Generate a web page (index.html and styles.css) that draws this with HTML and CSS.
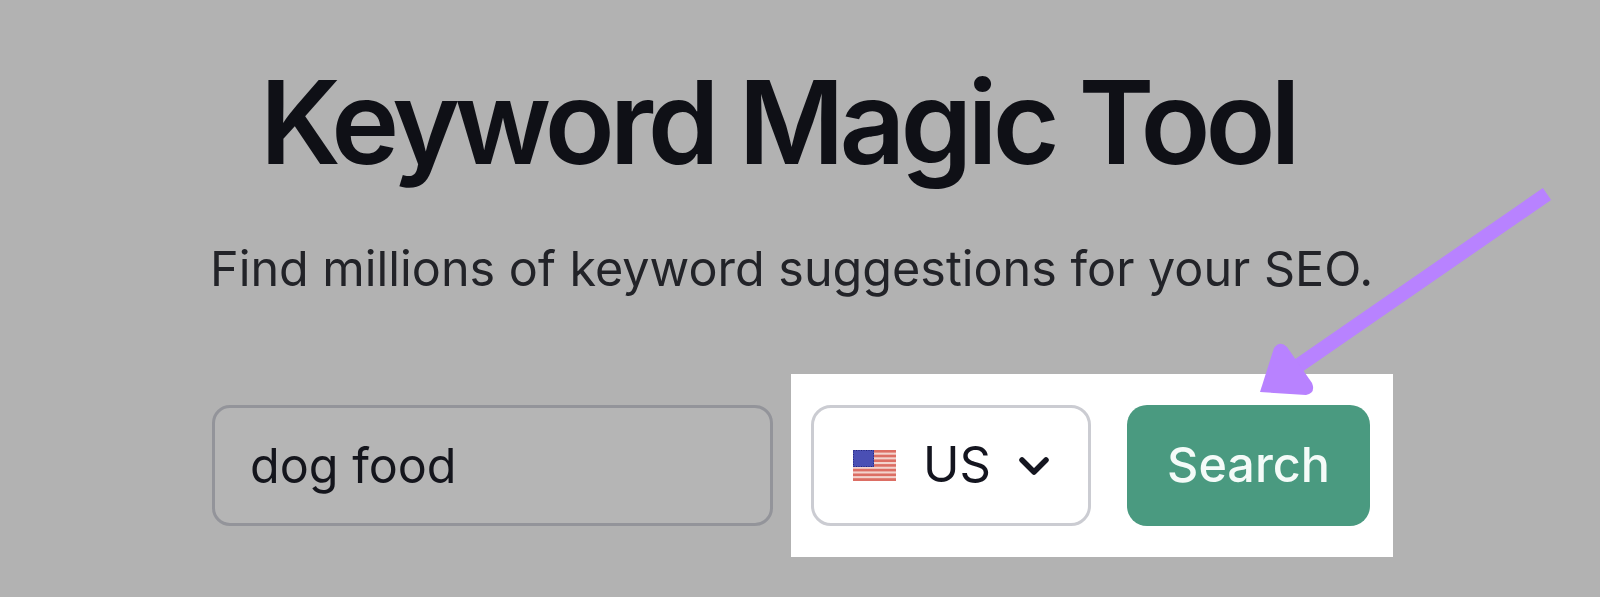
FILE: index.html
```html
<!DOCTYPE html>
<html lang="en">
<head>
<meta charset="utf-8">
<title>Keyword Magic Tool</title>
<link rel="stylesheet" href="styles.css">
</head>
<body>
<main class="page">
  <h1 class="title">Keyword Magic Tool</h1>
  <p class="subtitle">Find millions of keyword suggestions for your SEO.</p>
  <div class="form">
    <div class="input">dog food</div>
    <div class="highlight">
      <div class="select">
        <svg class="flag" viewBox="0 0 43 31" aria-hidden="true">
          <rect width="43" height="31" fill="#f3d3cd"/>
          <rect y="0" width="43" height="2.6" fill="#dc6e64"/>
          <rect y="4.7" width="43" height="2.6" fill="#dc6e64"/>
          <rect y="9.4" width="43" height="2.6" fill="#dc6e64"/>
          <rect y="14.1" width="43" height="2.6" fill="#dc6e64"/>
          <rect y="18.8" width="43" height="2.6" fill="#dc6e64"/>
          <rect y="23.5" width="43" height="2.6" fill="#dc6e64"/>
          <rect y="28.2" width="43" height="2.8" fill="#dc6e64"/>
          <rect width="21" height="17" fill="#4a4fb4"/>
          <path d="M.5 .5H20.500V16.500H.5Z" fill="none" stroke="#23277c" stroke-width="1" stroke-dasharray="1 1.500"/>
        </svg>
        <span class="code">US</span>
        <svg class="chevron" viewBox="0 0 30 20" aria-hidden="true">
          <path d="M3 4L15 16L27 4" fill="none" stroke="#14151f" stroke-width="5.500" stroke-linecap="round" stroke-linejoin="round"/>
        </svg>
      </div>
      <div class="button">Search</div>
    </div>
  </div>
</main>
<svg class="arrow" viewBox="0 0 1600 597" aria-hidden="true">
  <path d="M1547 194L1295 368" stroke="#b882ff" stroke-width="14.500" fill="none"/>
  <path d="M1274 348Q1280 340 1287 347L1312 383Q1316 393 1306 395L1260 392Z" fill="#b882ff"/>
</svg>
</body>
</html>
```

FILE: styles.css
```css
* { box-sizing: border-box; }
html, body { margin: 0; height: 597px; overflow: hidden; }
body { background: #b2b2b2; position: relative; font-family: "Inter", "Liberation Sans", sans-serif; }
.page { display: flex; flex-direction: column; padding-top: 56px; }
.title { margin: 0 0 0 260px; font-size: 115px; line-height: 134px; font-weight: 600; letter-spacing: -5px; color: #0f1016; white-space: nowrap; }
.subtitle { margin: 49px 0 0 210px; font-size: 48.500px; line-height: 60px; font-weight: 400; color: #222328; white-space: nowrap; }
.form { display: flex; align-items: center; margin: 75px 0 0 212px; }
.input { width: 561px; height: 121px; border: 3px solid #93949a; border-radius: 18px; background: #b5b5b5; padding-left: 35px; display: flex; align-items: center; font-size: 48.500px; color: #14151c; }
.highlight { display: flex; align-items: center; gap: 36px; margin-left: 18px; width: 602px; height: 183px; background: #fff; padding-left: 20px; }
.select { width: 280px; height: 121px; border: 3px solid #cbccd2; border-radius: 20px; background: #fff; display: flex; align-items: center; padding-left: 39px; }
.flag { width: 43px; height: 31px; }
.code { margin-left: 27px; padding-bottom: 3px; font-size: 49px; color: #14151f; }
.chevron { width: 30px; height: 20px; margin-left: 28px; }
.button { width: 243px; height: 121px; border-radius: 20px; background: #4a9a80; color: #f4fbf8; display: flex; align-items: center; justify-content: center; padding-bottom: 3px; font-size: 48.500px; font-weight: 500; }
.arrow { position: absolute; left: 0; top: 0; width: 1600px; height: 597px; }
```
